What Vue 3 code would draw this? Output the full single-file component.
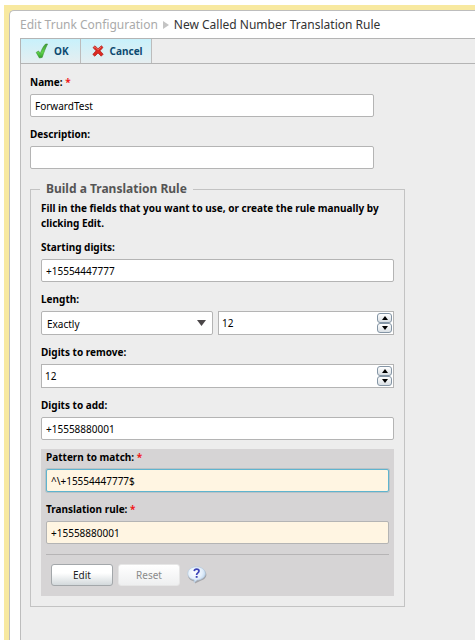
<script setup>
import { ref } from 'vue'

const name = ref('ForwardTest')
const description = ref('')
const startingDigits = ref('+15554447777')
const lengthMode = ref('Exactly')
const lengthValue = ref(12)
const digitsToRemove = ref(12)
const digitsToAdd = ref('+15558880001')
const pattern = ref('^\\+15554447777$')
const rule = ref('+15558880001')
</script>

<template>
  <div class="frame">
    <main class="page">
      <nav class="crumbs" aria-label="Breadcrumb">
        <a href="#">Edit Trunk Configuration</a>
        <svg class="crumb-arrow" viewBox="0 0 6 8" aria-hidden="true"><path d="M0 0L6 4L0 8Z" fill="#c4c4c4" /></svg>
        <span>New Called Number Translation Rule</span>
      </nav>

      <form class="body" @submit.prevent>
        <div class="toolbar">
          <button type="submit" class="tool">
            <svg class="tool-icon" viewBox="0 0 14 16" aria-hidden="true">
              <defs>
                <linearGradient id="tick" x1="0" y1="0" x2="0" y2="1">
                  <stop offset="0" stop-color="#3f9a35" />
                  <stop offset="0.6" stop-color="#5fd64a" />
                  <stop offset="1" stop-color="#2f9a28" />
                </linearGradient>
              </defs>
              <path d="M1.2 9.4L3.6 8L5.2 10.6C6.6 6.6 8.4 3.2 10.6 1L12.6 1C10.6 4.8 8.8 9.4 7.2 14.4L4.4 15Z" fill="url(#tick)" stroke="#3c8f34" stroke-width="0.6" stroke-linejoin="round" />
            </svg>
            OK
          </button>
          <button type="button" class="tool">
            <svg class="tool-icon cross" viewBox="0 0 12 12" aria-hidden="true">
              <path d="M1 2.6L3 0.8L6 3.8L9.4 0.8L11 2.4L8 5.8L11.2 9.2L9.2 11.2L6 8L2.8 11.2L0.8 9.4L4 5.8Z" fill="#dc2a22" stroke="#b01c18" stroke-width="0.7" stroke-linejoin="round" />
              <path d="M2 2.6L3 1.8L6 4.8L9.2 1.9" fill="none" stroke="#f0786c" stroke-width="0.8" />
            </svg>
            Cancel
          </button>
        </div>

        <div class="content">
          <div class="field outer">
            <label for="name">Name: <span class="req">*</span></label>
            <input id="name" v-model="name" type="text" class="box" />
          </div>
          <div class="field outer">
            <label for="description">Description:</label>
            <input id="description" v-model="description" type="text" class="box" />
          </div>

          <fieldset class="group">
            <legend>Build a Translation Rule</legend>
            <p>Fill in the fields that you want to use, or create the rule manually by clicking Edit.</p>

            <div class="field">
              <label for="starting">Starting digits:</label>
              <input id="starting" v-model="startingDigits" type="text" class="box" />
            </div>

            <div class="field">
              <label for="length-mode">Length:</label>
              <div class="pair">
                <div class="select">
                  <select id="length-mode" v-model="lengthMode">
                    <option>Exactly</option>
                    <option>At least</option>
                  </select>
                  <svg viewBox="0 0 9 6" aria-hidden="true"><path d="M0 0H9L4.5 6Z" fill="#4a4648" /></svg>
                </div>
                <div class="spinner">
                  <input v-model.number="lengthValue" type="text" inputmode="numeric" aria-label="Length value" />
                  <span class="steps">
                    <button type="button" aria-label="Increase length" @click="lengthValue++"><svg viewBox="0 0 6 4"><path d="M0 4L3 0L6 4Z" /></svg></button>
                    <button type="button" aria-label="Decrease length" @click="lengthValue--"><svg viewBox="0 0 6 4"><path d="M0 0H6L3 4Z" /></svg></button>
                  </span>
                </div>
              </div>
            </div>

            <div class="field">
              <label for="remove">Digits to remove:</label>
              <div class="spinner">
                <input id="remove" v-model.number="digitsToRemove" type="text" inputmode="numeric" />
                <span class="steps">
                  <button type="button" aria-label="Increase digits to remove" @click="digitsToRemove++"><svg viewBox="0 0 6 4"><path d="M0 4L3 0L6 4Z" /></svg></button>
                  <button type="button" aria-label="Decrease digits to remove" @click="digitsToRemove--"><svg viewBox="0 0 6 4"><path d="M0 0H6L3 4Z" /></svg></button>
                </span>
              </div>
            </div>

            <div class="field">
              <label for="add">Digits to add:</label>
              <input id="add" v-model="digitsToAdd" type="text" class="box" />
            </div>

            <div class="result">
              <div class="field">
                <label for="pattern">Pattern to match: <span class="req">*</span></label>
                <input id="pattern" v-model="pattern" type="text" class="box cream active" />
              </div>
              <div class="field">
                <label for="rule">Translation rule: <span class="req">*</span></label>
                <input id="rule" v-model="rule" type="text" class="box cream" />
              </div>
              <div class="actions">
                <button type="button" class="btn">Edit</button>
                <button type="button" class="btn" disabled>Reset</button>
                <button type="button" class="help" aria-label="Help">
                  <svg viewBox="0 0 20 18" aria-hidden="true">
                    <defs>
                      <radialGradient id="bubble" cx="0.4" cy="0.35" r="0.7">
                        <stop offset="0" stop-color="#ffffff" />
                        <stop offset="0.6" stop-color="#e4effb" />
                        <stop offset="1" stop-color="#b4cfec" />
                      </radialGradient>
                    </defs>
                    <path d="M10 2C15 2 19.4 4.6 19.4 8.8C19.4 11.6 17 13.8 13.6 14.8L8 17.6L8.2 15.4C4 15 1 12.6 1 9Z" fill="#a3a3a8" />
                    <path d="M9.4 0.8C14.2 0.8 18.4 3.6 18.4 7.5C18.4 11.2 14.6 13.8 10.4 14.1L7 16.4L7.2 13.9C3.4 13.2 0.8 10.8 0.8 7.5C0.8 3.6 4.6 0.8 9.4 0.8Z" fill="url(#bubble)" stroke="#b3c8dd" stroke-width="0.7" />
                    <path d="M7.2 5.2C7.4 3.6 8.4 3.1 9.6 3.1C11 3.1 12 3.9 12 5.1C12 6.8 9.6 7 9.6 8.9" fill="none" stroke="#3e45b8" stroke-width="1.7" />
                    <rect x="8.7" y="10" width="1.9" height="1.8" fill="#3e45b8" />
                  </svg>
                </button>
              </div>
            </div>
          </fieldset>
        </div>
      </form>
    </main>
  </div>
</template>

<style>
body {
  background: #fff;
}
</style>

<style scoped>
* {
  box-sizing: border-box;
}

.frame {
  display: flex;
  min-height: 100vh;
  padding: 5px 0 0 4px;
  font: 10px/16px "Noto Sans", "Open Sans", sans-serif;
  color: #000;
}

.page {
  display: flex;
  flex: 1;
  flex-direction: column;
  border-top: 5px solid #f8e9a0;
  border-left: 5px solid #f8e9a0;
  background: #f8e9a0;
}

.page > * {
  background: #fff;
}

.crumbs {
  display: flex;
  align-items: center;
  gap: 5px;
  height: 28px;
  padding: 1px 0 0 10px;
  border-top: 1px solid #bdbdbd;
  border-left: 1px solid #bdbdbd;
  border-top-left-radius: 5px;
  font-size: 12px;
  color: #333;
  white-space: nowrap;
}

.crumbs a {
  color: #aaa;
  text-decoration: none;
}

.crumb-arrow {
  width: 6px;
  height: 8px;
}

.body {
  display: flex;
  flex: 1;
  flex-direction: column;
  padding-left: 10px;
  border-left: 1px solid #bdbdbd;
}

.toolbar {
  display: flex;
  height: 26px;
  border: solid #b4b4b4;
  border-width: 1px 0 1px 1px;
  background: #ededed;
}

button {
  font: inherit;
  margin: 0;
}

.tool {
  display: flex;
  align-items: center;
  gap: 5px;
  padding: 0 11px 0 14px;
  border: 0;
  border-right: 1px solid #bcbcbc;
  background: linear-gradient(#c8f1fb, #e6eef0);
  color: #0d4a70;
  font-weight: 700;
}

.tool + .tool {
  padding: 0 8px 0 11px;
  gap: 6px;
}

.tool-icon {
  width: 14px;
  height: 16px;
}

.cross {
  width: 12px;
  height: 12px;
}

.content {
  flex: 1;
  padding: 10px 10px 33px 9px;
  border-left: 1px solid #bdbdbd;
  background: #ededed;
}

.field {
  display: flex;
  flex-direction: column;
  gap: 4px;
  margin-bottom: 9px;
}

.outer {
  max-width: 344px;
}

label {
  font-weight: 700;
}

.req {
  color: #f01818;
}

input,
select {
  font: inherit;
  color: #000;
  min-width: 0;
  outline: 0;
}

.box {
  width: 100%;
  height: 23px;
  padding: 0 4px;
  border: 1px solid #b4b4b4;
  border-radius: 2px;
  background: #fff;
}

.cream {
  background: #fff5e2;
}

.active {
  border-color: #5fb4cf;
  box-shadow: 0 0 0 1px #b9c2c6;
}

.group {
  min-width: 0;
  max-width: 375px;
  margin: 11px 0 0;
  padding: 3px 10px 10px;
  border: 1px solid #c3c3c3;
}

legend {
  margin-left: -1px;
  padding: 0 6px;
  font-size: 12px;
  line-height: 18px;
  font-weight: 700;
  color: #555;
}

.group p {
  margin: 0 0 8px;
  line-height: 15px;
  font-weight: 700;
}

.pair {
  display: grid;
  grid-template-columns: 172px minmax(0, 1fr);
  gap: 5px;
}

.select {
  display: grid;
  align-items: center;
  height: 24px;
  border: 1px solid #b4b4b4;
  border-radius: 2px;
  background: #fff;
}

.select > * {
  grid-area: 1 / 1;
}

.select select {
  appearance: none;
  width: 100%;
  height: 22px;
  padding: 2px 20px 0 5px;
  border: 0;
  background: transparent;
}

.select svg {
  justify-self: end;
  width: 9px;
  height: 6px;
  margin-right: 6px;
  pointer-events: none;
}

.spinner {
  display: flex;
  height: 24px;
  padding: 1px;
  border: 1px solid #b4b4b4;
  background: #fff;
}

.spinner input {
  flex: 1;
  padding: 0 2px;
  border: 0;
  background: transparent;
}

.steps {
  display: grid;
  width: 15px;
}

.steps button {
  display: grid;
  place-items: center;
  height: 10px;
  padding: 0;
  border: 1px solid #8495a5;
  border-radius: 3px;
  background: linear-gradient(#fff, #d9dfe4);
}

.steps svg {
  width: 6px;
  height: 4px;
}

.result {
  padding: 0 5px 10px;
  background: #d6d4d5;
}

.actions {
  display: flex;
  align-items: center;
  gap: 5px;
  padding: 9px 5px 0;
  border-top: 1px solid #b6b4b5;
}

.result .field:nth-child(2) {
  margin-bottom: 10px;
}

.btn {
  width: 62px;
  height: 22px;
  padding: 0;
  border: 1px solid #a3a7aa;
  border-radius: 3px;
  background: linear-gradient(#fff 40%, #d3d9dc);
  color: #222;
}

.btn:disabled {
  border-color: #e6e6e6;
  background: linear-gradient(#fff, #eeeff0);
  color: #8b8b8b;
}

.help {
  width: 20px;
  height: 18px;
  margin-left: 2px;
  padding: 0;
  border: 0;
  background: none;
}

.help svg {
  display: block;
}
</style>
